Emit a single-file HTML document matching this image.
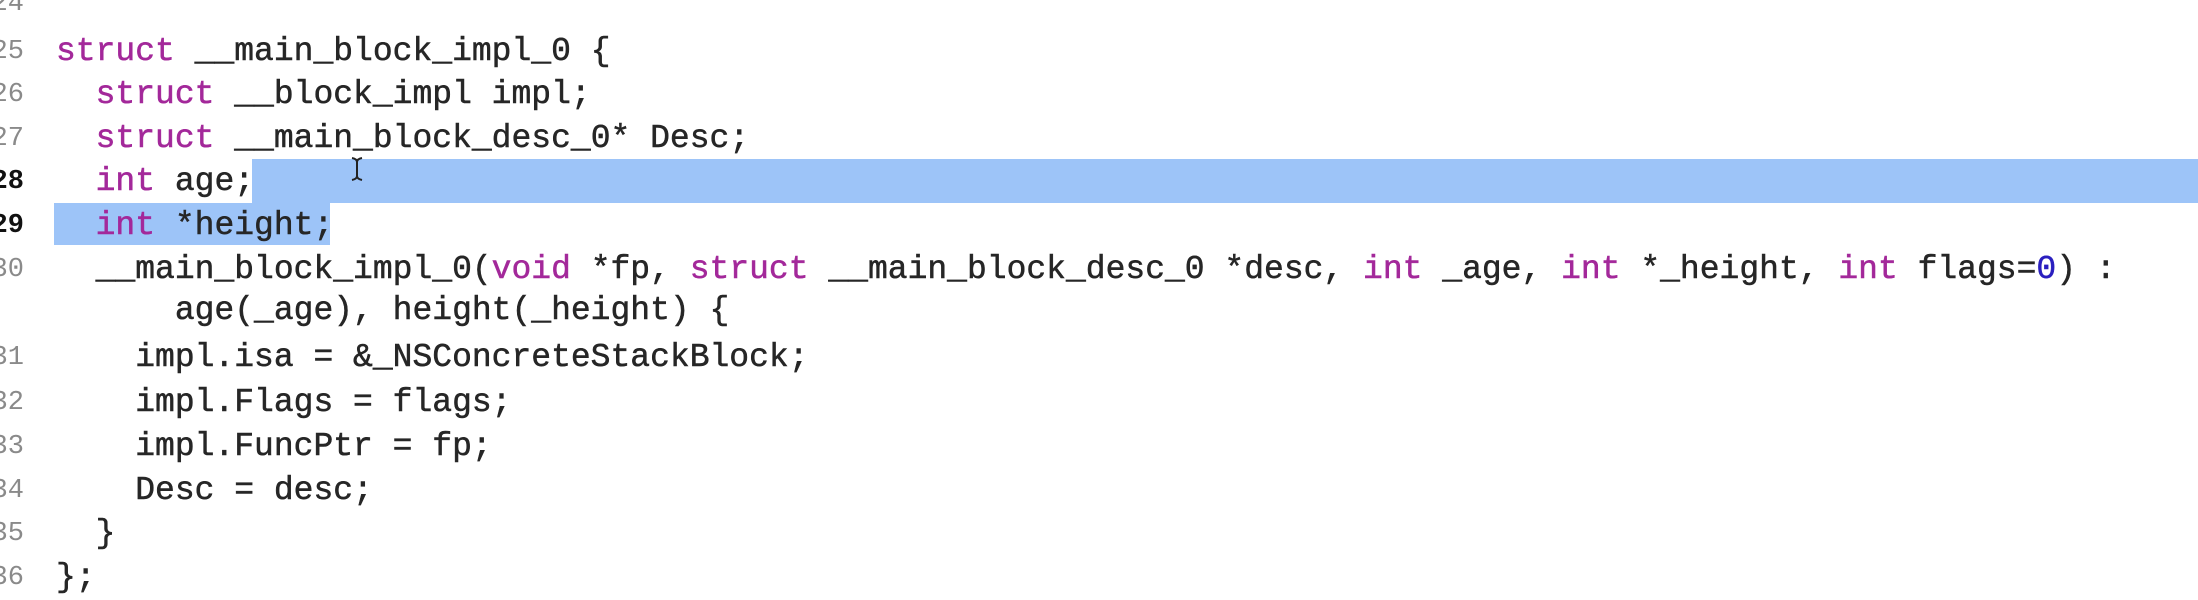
<!DOCTYPE html>
<html><head><meta charset="utf-8"><style>
html,body{margin:0;padding:0;background:#fff;width:2198px;height:600px;overflow:hidden;position:relative}
.l{position:absolute;left:0;height:44px;line-height:44px;white-space:pre;font-family:"Liberation Mono",monospace;font-size:33px;color:#262626;width:2198px;-webkit-text-stroke:0.5px currentColor}
.n{position:absolute;right:2174px;font-size:27px;color:#8a8a8a;text-align:right;-webkit-text-stroke:0}
.n.b{color:#111;font-weight:bold}
.c{position:absolute;left:56px}
.k{color:#a3289a}
.num{color:#2a1fbf}
.hl{position:absolute;background:#9dc4f8}
</style></head><body>
<div class="hl" style="left:252px;top:159px;width:1946px;height:44px"></div>
<div class="hl" style="left:54px;top:203px;width:276px;height:42px"></div>

<div class="l" style="top:-18px"><span class="n">24</span></div>
<div class="l" style="top:30px"><span class="n">25</span><span class="c"><span class="k">struct</span> __main_block_impl_0 {</span></div>
<div class="l" style="top:73px"><span class="n">26</span><span class="c">  <span class="k">struct</span> __block_impl impl;</span></div>
<div class="l" style="top:117px"><span class="n">27</span><span class="c">  <span class="k">struct</span> __main_block_desc_0* Desc;</span></div>
<div class="l" style="top:160px"><span class="n b">28</span><span class="c">  <span class="k">int</span> age;</span></div>
<div class="l" style="top:204px"><span class="n b">29</span><span class="c">  <span class="k">int</span> *height;</span></div>
<div class="l" style="top:248px"><span class="n">30</span><span class="c">  __main_block_impl_0(<span class="k">void</span> *fp, <span class="k">struct</span> __main_block_desc_0 *desc, <span class="k">int</span> _age, <span class="k">int</span> *_height, <span class="k">int</span> flags=<span class="num">0</span>) :</span></div>
<div class="l" style="top:289px"><span class="c">      age(_age), height(_height) {</span></div>
<div class="l" style="top:336px"><span class="n">31</span><span class="c">    impl.isa = &amp;_NSConcreteStackBlock;</span></div>
<div class="l" style="top:381px"><span class="n">32</span><span class="c">    impl.Flags = flags;</span></div>
<div class="l" style="top:425px"><span class="n">33</span><span class="c">    impl.FuncPtr = fp;</span></div>
<div class="l" style="top:469px"><span class="n">34</span><span class="c">    Desc = desc;</span></div>
<div class="l" style="top:512px"><span class="n">35</span><span class="c">  }</span></div>
<div class="l" style="top:556px"><span class="n">36</span><span class="c">};</span></div>

<svg style="position:absolute;left:349px;top:156px" width="16" height="26" viewBox="0 0 16 26">
<path d="M3 2 Q8 3 8 6 L8 20 Q8 23 3 24 M13 2 Q8 3 8 6 M8 20 Q8 23 13 24" stroke="#222" stroke-width="2" fill="none"/>
</svg>
</body></html>
